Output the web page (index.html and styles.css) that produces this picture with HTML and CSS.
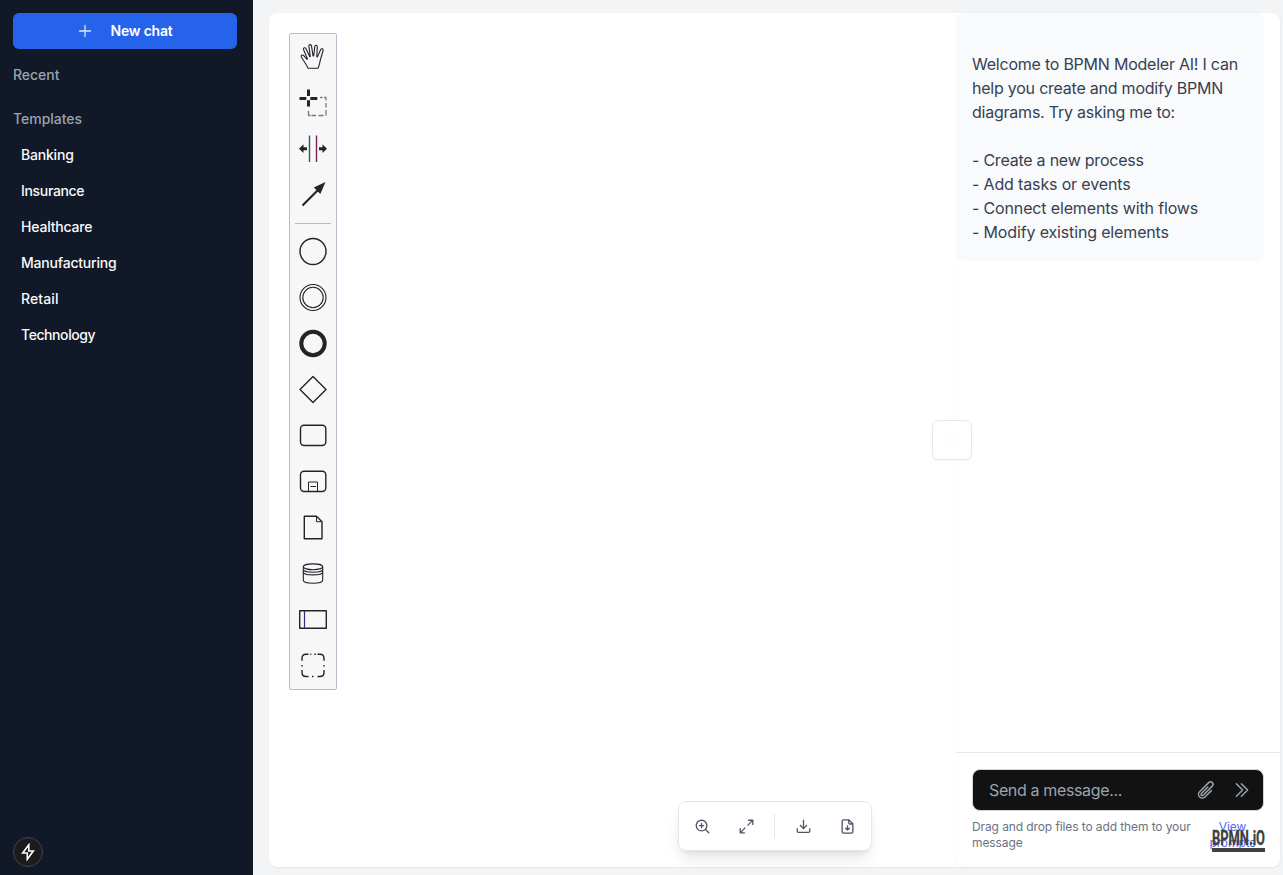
FILE: index.html
```html
<!DOCTYPE html>
<html lang="en">
<head>
<meta charset="utf-8">
<title>BPMN Modeler AI</title>
<link rel="stylesheet" href="styles.css">
</head>
<body>
<div class="app">
  <aside class="sidebar">
    <button class="new-chat">
      <svg width="16" height="16" viewBox="0 0 16 16"><path d="M8 2.500v11M2.500 8h11"/></svg>
      <span>New chat</span>
    </button>
    <h2 class="group">Recent</h2>
    <h2 class="group">Templates</h2>
    <nav class="templates">
      <a>Banking</a>
      <a class="snug">Insurance</a>
      <a>Healthcare</a>
      <a>Manufacturing</a>
      <a class="wide">Retail</a>
      <a class="tight">Technology</a>
    </nav>
    <div class="dev-badge"><svg width="16" height="18" viewBox="0 0 16 18"><path d="M8.800 1.800 2.700 10h4.600v6.200L13.300 8H8.800Z"/></svg></div>
  </aside>
  <main class="main">
    <div class="workspace">
      <section class="canvas">
        <div class="palette">
          <div class="entry"><svg class="thin" viewBox="0 0 46 46"><path d="M18 34.200C16.300 30 13.500 27 11.300 22.700c-.7-1.500 1.200-2.300 2.400-1.100l3.300 3.700.5-.3-4-9.500c-.6-1.700 1.600-2.500 2.400-.9l3.900 8.200.5-.2-1.400-10.500c-.1-1.900 2.200-2 2.600-.2l1.500 10h.7l1.100-9.500c.3-1.800 2.600-1.500 2.500.4l-.5 9.900.6.200 3.200-7.200c.8-1.700 3-.9 2.500.8l-2.600 9c-.9 3.200-1 6-2.500 8.700Z"/></svg></div>
          <div class="entry"><svg viewBox="0 0 46 46"><path class="thick" d="M9.500 18.500h6.800M20.300 18.500h7M18.500 9.500v6.500M18.500 20.300v6.200"/><path class="faint" d="M30 17.500h2.500M34 17.500h2v3M36 23v4.500M36 30v5.500M33.500 35.500h-5M26 35.500h-4.500M18.500 31v4.500h2"/></svg></div>
          <div class="entry"><svg viewBox="0 0 46 46"><path class="teal" d="M19.500 9.500v26.500"/><path class="plum" d="M26.500 9.500v26.500"/><path class="solid" d="m9 22.700 4.500-4.400v2.900H17v3h-3.500v2.900ZM37 22.700l-4.500-4.400v2.900H29v3h3.500v2.900Z"/></svg></div>
          <div class="entry"><svg viewBox="0 0 46 46"><path class="arrow" d="M12.500 33.500 31 15"/><path class="solid" d="m35.500 10-5.200 11.900-6.500-6.500Z"/></svg></div>
          <hr class="divider">
          <div class="entry"><svg viewBox="0 0 46 46"><circle cx="23" cy="22.500" r="13"/></svg></div>
          <div class="entry"><svg class="thin" viewBox="0 0 46 46"><circle cx="23" cy="22.500" r="13"/><circle cx="23" cy="22.500" r="10.200"/></svg></div>
          <div class="entry"><svg viewBox="0 0 46 46"><circle class="heavy" cx="23" cy="22.500" r="11.700"/></svg></div>
          <div class="entry"><svg viewBox="0 0 46 46"><path d="m23 9.500 13 13-13 13-13-13Z"/></svg></div>
          <div class="entry"><svg viewBox="0 0 46 46"><rect x="10.500" y="12.200" width="25.300" height="20.300" rx="3.500"/></svg></div>
          <div class="entry"><svg viewBox="0 0 46 46"><rect x="10.500" y="12.200" width="25.300" height="20.300" rx="3.500"/><path class="fine" d="M18.500 32.500v-9.500h9v9.500M20.500 27.500h5.500"/></svg></div>
          <div class="entry"><svg viewBox="0 0 46 46"><path d="M14.300 11.200H26.500l5.500 5.500v17H14.300Z"/><path class="fine" d="M26.500 11.200v5.500H32"/></svg></div>
          <div class="entry"><svg class="thin" viewBox="0 0 46 46"><ellipse cx="23" cy="15.800" rx="9.700" ry="2.900"/><path d="M13.300 15.800v13.500c0 4 19.400 4 19.400 0V15.800M13.300 18.300c0 4 19.400 4 19.400 0M13.300 20.900c0 4 19.400 4 19.400 0"/></svg></div>
          <div class="entry"><svg viewBox="0 0 46 46"><rect x="9.700" y="13.700" width="26.600" height="17.600"/><path class="navy" d="M14.500 14v17"/></svg></div>
          <div class="entry"><svg viewBox="0 0 46 46"><path d="M18.500 11.300h-2.500q-4 0-4 4v2.500M27.500 11.300h2.500q4 0 4 4v2.500M12 27v2.500q0 4 4 4h2.500M34 27v2.500q0 4-4 4h-2.500M20.300 11.300h1M24.300 11.300h1.500M22 33.500h1.500M12 22v1.500M34 22v1.500"/></svg></div>
        </div>
        <div class="toolbar">
          <svg viewBox="0 0 16 16"><circle cx="7" cy="7" r="5.700"/><path d="m11.200 11.200 3.500 3.500M7 4.700v4.600M4.700 7h4.600"/></svg>
          <svg viewBox="0 0 16 16"><path d="M10.200 1.300h4.500v4.500M14.500 1.500 9.500 6.500M5.800 14.700H1.300v-4.500M1.500 14.500l5-5"/></svg>
          <span class="toolbar-rule"></span>
          <svg viewBox="0 0 16 16"><path d="M8 1.300v9M4.700 7l3.300 3.300L11.300 7M1.300 10.300v2.600q0 1.400 1.400 1.400h10.600q1.400 0 1.400-1.400v-2.600"/></svg>
          <svg viewBox="0 0 16 16"><path d="M9.600.900H3.800q-1.500 0-1.500 1.500v11.200q0 1.500 1.500 1.500h8.400q1.500 0 1.500-1.500V5ZM9.300 1.200v2.700q0 1.400 1.400 1.400h2.800M8 7.300v4.500M6 9.900l2 2 2-2"/></svg>
        </div>
      </section>
      <section class="chat">
        <div class="welcome">
          <p>Welcome to BPMN Modeler AI! I can</p>
          <p>help you create and modify BPMN</p>
          <p>diagrams. Try asking me to:</p>
          <p class="gap">- Create a new process</p>
          <p class="loose">- Add tasks or events</p>
          <p class="loose">- Connect elements with flows</p>
          <p class="loose">- Modify existing elements</p>
        </div>
        <div class="composer">
          <div class="field">
            <span class="placeholder">Send a message...</span>
            <svg viewBox="0 0 24 24"><path d="m18.375 12.739-7.693 7.693a4.500 4.500 0 0 1-6.364-6.364l10.940-10.940A3 3 0 1 1 19.500 7.372L8.552 18.320m.009-.010-.010.010m5.699-9.941-7.810 7.810a1.500 1.500 0 0 0 2.112 2.130"/></svg>
            <svg viewBox="0 0 24 24"><path d="m5.250 4.500 7.500 7.500-7.500 7.500m6-15 7.500 7.500-7.500 7.500"/></svg>
          </div>
          <div class="hints">
            <p>Drag and drop files to add them to your<br>message</p>
            <a>View<br>prompts</a>
          </div>
        </div>
        <svg class="brand" width="54" height="23" viewBox="0 0 54 23"><text x="0" y="15.500" textLength="53" lengthAdjust="spacingAndGlyphs">BPMN.iO</text><rect x="0" y="19" width="53" height="4"/></svg>
      </section>
      <div class="collapse"><svg width="16" height="16" viewBox="0 0 16 16"><path d="m6 4 4 4-4 4"/></svg></div>
    </div>
  </main>
</div>
</body>
</html>
```
FILE: styles.css
```css
* { box-sizing: border-box; }
body { margin: 0; font-family: Inter, "Liberation Sans", sans-serif; background: #f3f4f6; }
p, h2 { margin: 0; }
svg { display: block; fill: none; stroke-linecap: round; stroke-linejoin: round; }
.app { display: flex; height: 875px; overflow: hidden; }
.sidebar { position: relative; width: 253px; flex: none; padding: 13px 16px 0 13px; background: #111827; }
.new-chat { display: flex; align-items: center; justify-content: center; gap: 17px; width: 224px; height: 36px; padding: 0; border: 0; border-radius: 6px; background: #2563eb; color: #fff; font: 600 14px/20px Inter, sans-serif; letter-spacing: -.2px; }
.new-chat svg { stroke: #dbe6ff; stroke-width: 1.300; }
.group { margin-top: 16px; font-size: 14px; line-height: 20px; font-weight: 500; color: #9ca3af; letter-spacing: -.02px; }
.group + .group { margin-top: 24px; }
.templates { display: flex; flex-direction: column; margin-top: 8px; }
.templates a { height: 36px; padding: 8px; color: #f9fafb; font-size: 14px; line-height: 20px; font-weight: 500; letter-spacing: -.2px; }
.templates .snug { letter-spacing: -.33px; }
.templates .tight { letter-spacing: -.42px; }
.templates .wide { letter-spacing: .12px; }
.dev-badge { position: absolute; left: 13px; bottom: 8px; display: grid; place-items: center; width: 30px; height: 30px; border: 1px solid #44464b; border-radius: 50%; background: #1c1c1e; }
.dev-badge svg { stroke: #fff; stroke-width: 1.600; stroke-linejoin: miter; }
.main { flex: 1; padding: 13px 3px 8px 16px; }
.workspace { position: relative; display: flex; height: 854px; border-radius: 8px; background: #fff; box-shadow: 0 1px 2px rgba(0, 0, 0, .06); }
.canvas { position: relative; flex: 1; padding: 20px; }
.palette { width: 48px; border: 1px solid #bbb8c9; border-radius: 2px; background: #f7f7f7; }
.entry { height: 46px; }
.entry svg { width: 46px; height: 46px; stroke: #22242a; stroke-width: 1.400; stroke-linecap: butt; }
.entry .thin { stroke-width: 1.100; }
.entry .fine { stroke-width: 1; }
.entry .thick { stroke-width: 3; }
.entry .faint { stroke: #777; stroke-width: 1.300; }
.entry .teal { stroke: #2c5a60; }
.entry .plum { stroke: #782355; }
.entry .navy { stroke: #303080; stroke-width: 1.200; }
.entry .heavy { stroke-width: 4; }
.entry .arrow { stroke-width: 2.200; }
.entry .solid { fill: #22242a; stroke: none; }
.divider { height: 1px; margin: 5px; border: 0; background: #bbb8c9; }
.toolbar { position: absolute; left: 409px; bottom: 16px; display: flex; align-items: center; gap: 29px; width: 194px; height: 50px; padding: 0 16px; border: 1px solid #e5e7eb; border-radius: 8px; background: #fff; box-shadow: 0 10px 15px -3px rgba(0, 0, 0, .1), 0 4px 6px -4px rgba(0, 0, 0, .1); }
.toolbar svg { flex: none; width: 15px; height: 15px; stroke: #4b5563; stroke-width: 1.400; }
.toolbar-rule { flex: none; width: 1px; height: 24px; margin: 0 -8px 0 -9px; background: #e5e7eb; }
.chat { position: relative; display: flex; flex-direction: column; justify-content: space-between; width: 324px; border-radius: 8px; background: #fff; box-shadow: 0 0 2px rgba(0, 0, 0, .06); }
.welcome { width: 308px; height: 248px; padding: 39px 0 0 16px; border-radius: 8px; background: #f9fafb; color: #374151; font-size: 16px; line-height: 24px; letter-spacing: -.23px; white-space: nowrap; }
.welcome .loose { letter-spacing: -.15px; }
.welcome .gap { margin-top: 24px; }
.composer { height: 115px; padding: 16px 16px 0; border-top: 1px solid #e5e7eb; }
.field { display: flex; align-items: center; width: 292px; height: 42px; padding: 0 11px 0 16px; border: 1px solid #d1d5db; border-radius: 8px; background: #121212; }
.placeholder { flex: 1; color: #9ca3af; font-size: 16px; line-height: 24px; letter-spacing: -.36px; }
.field svg { width: 20px; height: 20px; margin-left: 16px; stroke: #9ca3af; stroke-width: 1.800; }
.hints { display: flex; justify-content: space-between; margin-top: 8px; color: #6b7280; font-size: 12px; line-height: 16px; letter-spacing: -.1px; }
.hints p { white-space: nowrap; }
.hints a { width: 63px; color: #4f6ef7; text-align: center; }
.brand { position: absolute; right: 14px; bottom: 15px; fill: #404040; overflow: visible; }
.brand text { font: 700 20px "Liberation Sans Narrow", Roboto, sans-serif; stroke: #404040; stroke-width: .3; }
.collapse { position: absolute; left: 663px; top: 407px; display: grid; place-items: center; width: 40px; height: 40px; border: 1px solid #e5e7eb; border-radius: 6px; background: #fff; box-shadow: 0 1px 2px rgba(0, 0, 0, .05); }
.collapse svg { stroke: #f9f9fa; stroke-width: 1.300; }
```
